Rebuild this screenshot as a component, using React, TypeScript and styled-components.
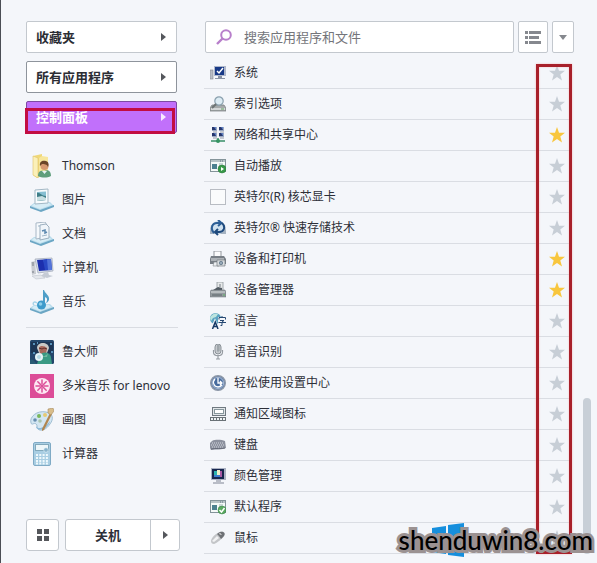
import React, { useState } from "react";
import styled, { createGlobalStyle } from "styled-components";

const GlobalStyle = createGlobalStyle`
  *, *::before, *::after { box-sizing: border-box; }
  body {
    margin: 0;
    background: #f4f6fa;
    color: #2d2f38;
    font: 12px/18px "Noto Sans", "Noto Sans CJK SC", sans-serif;
  }
  button, input { font: inherit; color: inherit; margin: 0; }
  button { cursor: pointer; }
  a { color: inherit; text-decoration: none; }
  svg { display: block; flex: none; }
`;

const Menu = styled.div`
  display: grid;
  grid-template-columns: 152px minmax(0, 1fr);
  column-gap: 26px;
  min-height: 100vh;
  padding: 21px 23px 9px 25px;
  border-left: 1px solid #4a4d54;
`;

const Sidebar = styled.aside`
  display: flex;
  flex-direction: column;
  padding-bottom: 3px;
`;

const Categories = styled.nav`
  display: flex;
  flex-direction: column;
  gap: 8px;
  margin-bottom: 16px;
`;

const CategoryButton = styled.button<{ $tone?: "dark" | "active" }>`
  position: relative;
  display: flex;
  align-items: center;
  justify-content: space-between;
  width: 151px;
  height: 32px;
  padding: 0 10px 0 9px;
  border: 1px solid ${(p) => (p.$tone === "active" ? "#7d4aa3" : p.$tone === "dark" ? "#8e949c" : "#c3c8ce")};
  border-radius: 2px;
  background: ${(p) => (p.$tone === "active" ? "#c170fb" : "#fff")};
  color: ${(p) => (p.$tone === "active" ? "#fff" : "#2b2d34")};
  font-size: 13px;
  font-weight: 700;
`;

const CategoryFrame = styled.span`
  position: absolute;
  inset: 6px 1px -2px -2px;
  border: 3px solid #c20d42;
  pointer-events: none;
`;

const Arrow = styled.span<{ $light?: boolean }>`
  border: solid transparent;
  border-width: 4px 0 4px 5px;
  border-left-color: ${(p) => (p.$light ? "#f8e9ff" : "#55575c")};
`;

const Places = styled.ul`
  list-style: none;
  margin: 0;
  padding: 0;
`;

const Place = styled.a`
  display: flex;
  align-items: center;
  gap: 8px;
  height: 34px;
  padding-left: 4px;
  white-space: nowrap;
`;

const Divider = styled.hr`
  width: 100%;
  margin: 8px 0 7px;
  border: 0;
  border-top: 1px solid #d9dce2;
`;

const PowerBar = styled.footer`
  display: flex;
  gap: 6px;
  width: 154px;
  margin-top: auto;
`;

const TilesButton = styled.button`
  display: grid;
  place-items: center;
  width: 33px;
  height: 32px;
  padding: 0;
  border: 1px solid #c3c8ce;
  border-radius: 3px;
  background: #fff;
`;

const PowerGroup = styled.div`
  display: flex;
  flex: 1;
  height: 32px;
  border: 1px solid #c3c8ce;
  border-radius: 3px;
  background: #fff;
`;

const PowerButton = styled.button`
  flex: 1;
  padding: 0;
  border: 0;
  background: none;
  font-size: 13px;
  font-weight: 700;
`;

const PowerMore = styled.button`
  display: grid;
  place-items: center;
  width: 29px;
  padding: 0;
  border: 0;
  border-left: 1px solid #c3c8ce;
  background: none;
`;

const Content = styled.main`
  display: flex;
  flex-direction: column;
  gap: 5px;
`;

const Toolbar = styled.div`
  display: flex;
  gap: 4px;
  height: 32px;
  padding-left: 1px;
`;

const SearchBox = styled.label`
  display: flex;
  flex: 1;
  align-items: center;
  gap: 12px;
  min-width: 0;
  padding: 0 10px;
  border: 1px solid #c3c8ce;
  border-radius: 2px;
  background: #fff;
`;

const SearchInput = styled.input`
  flex: 1;
  min-width: 0;
  padding: 0;
  border: 0;
  outline: 0;
  background: none;
  font-size: 13px;
  &::placeholder { color: #74757a; opacity: 1; }
`;

const ToolButton = styled.button<{ $narrow?: boolean }>`
  display: grid;
  place-items: center;
  width: ${(p) => (p.$narrow ? 22 : 30)}px;
  padding: 0;
  border: 1px solid #c3c8ce;
  border-radius: 2px;
  background: #fff;
`;

const Results = styled.div`
  position: relative;
  margin-right: 3px;
`;

const ResultList = styled.ul`
  list-style: none;
  margin: 0;
  padding: 0;
`;

const ResultRow = styled.li`
  display: flex;
  align-items: center;
  height: 31px;
  padding: 0 6px;
  border-bottom: 1px solid #dadde3;
`;

const ResultLink = styled.a`
  display: flex;
  flex: 1;
  align-items: center;
  gap: 8px;
`;

const StarButton = styled.button`
  padding: 0;
  border: 0;
  background: none;
`;

const StarFrame = styled.div`
  position: absolute;
  top: 6px;
  right: -1px;
  bottom: 0;
  width: 36px;
  border: 3px solid #a8202a;
  box-shadow: 0 0 2px #f5b8bc, inset 0 0 2px #f5b8bc;
  pointer-events: none;
`;

const ScrollThumb = styled.div`
  position: absolute;
  right: -20px;
  bottom: 0;
  width: 8px;
  height: 156px;
  border-radius: 4px;
  background: #c8cfd7;
`;

const Watermark = styled.div`
  position: absolute;
  right: 4px;
  bottom: 5px;
  display: grid;
  align-items: center;
  pointer-events: none;
`;

const WatermarkLogo = styled.svg`
  grid-area: 1 / 1;
  margin-left: 33px;
`;

const WatermarkText = styled.span`
  grid-area: 1 / 1;
  color: #000;
  font: 500 26px/36px Lato, sans-serif;
  -webkit-text-stroke: 6px #9b9292;
  paint-order: stroke fill;
`;

const Small = ({ children }: { children: React.ReactNode }) => (
  <svg width="16" height="16" viewBox="0 0 16 16" aria-hidden="true">{children}</svg>
);
const Large = ({ children }: { children: React.ReactNode }) => (
  <svg width="24" height="24" viewBox="0 0 24 24" aria-hidden="true">{children}</svg>
);

const Tray = () => (
  <>
    <path d="M4 15 20 14 24 18 10 23 0 18Z" fill="#b9dcec" />
    <path d="M0 18 10 22 24 17V19L11 24 0 20Z" fill="#6ba6c4" />
    <path d="M4 16 19 15 21 17 10 21 2 18Z" fill="#d7edf6" />
  </>
);

const UserFolder = () => (
  <Large>
    <path d="M3 2 12 0V22L7 24 3 21Z" fill="#f0d878" />
    <path d="M12 2 18 3V21L9 23V4Z" fill="#f7e69c" />
    <path d="M3 2 8 4V24L3 21Z" fill="#fbf0b8" stroke="#dfc56a" strokeWidth=".6" />
    <circle cx="14.500" cy="12" r="4" fill="#d79a70" />
    <path d="M10 12C9 7 13 6 16 7S19 11 18 13C17 10 14 10 12 10Z" fill="#6b4628" />
    <path d="M8 22C8 17 11 16 14 17 19 15 21 18 21 22 17 24 12 24 8 22Z" fill="#5f9e7c" />
    <path d="M12 17 14.500 20 17 17" fill="#e8f2f4" />
  </Large>
);
const Pictures = () => (
  <Large>
    <Tray />
    <path d="M5 2 18 1V15L5 16Z" fill="#f7fbfd" stroke="#a3b8c5" />
    <path d="M7 4 16 3.500V12L7 13Z" fill="#86bfd2" />
    <path d="M7 5C10 4 11 8 16 8V12L7 13Z" fill="#3e7d86" />
    <path d="M7 9 12 8 16 10V12L7 13Z" fill="#c8dfe2" />
  </Large>
);
const Documents = () => (
  <Large>
    <Tray />
    <path d="M6 1 15 0 17 3V15L6 17Z" fill="#f5f9fc" stroke="#a9b8c6" />
    <path d="M10 3 16 2 19 5V16L10 18Z" fill="#f0f5fa" stroke="#9cafbf" />
    <path d="M12 9 15 8V11L17 10" stroke="#5c88af" strokeWidth="1.500" fill="none" />
    <path d="M12 14 17 13M8 4 10 4" stroke="#a0b6c8" />
  </Large>
);
const Computer = () => (
  <Large>
    <path d="M1 6 5 5 6 18 2 19Z" fill="#c9ccd2" />
    <path d="M2 7H4M2 9H4M2 16H4" stroke="#777c86" />
    <path d="M5 3 22 2 23 15 8 17Z" fill="#d5dce8" stroke="#9ca5b5" strokeWidth=".7" />
    <path d="M7 4 21 3 22 14 9 15Z" fill="#1c2fae" />
    <path d="M13 4 21 3 22 14 18 14Z" fill="#5374d9" />
    <path d="M13 4 17 3 18 14 15 14Z" fill="#2948c4" />
    <path d="M14 17 18 16 19 19 23 20 17 22 11 20Z" fill="#c5cbd5" />
    <path d="M2 20 11 19 15 22 6 23Z" fill="#e4e7ec" stroke="#b5bbc5" strokeWidth=".5" />
  </Large>
);
const Music = () => (
  <Large>
    <Tray />
    <path d="M14 0C15 4 20 5 19 10 18 12 17 13 16 13 18 9 17 8 15 7V17H13V0Z" fill="#4f9fc8" />
    <circle cx="11.500" cy="15" r="4.500" fill="#3d9bcb" />
    <circle cx="10.500" cy="14" r="1.800" fill="#8ccdea" />
    <path d="M4 15C2 13 4 11 7 13" fill="none" stroke="#a8d5e9" strokeWidth="1.500" />
  </Large>
);
const Master = () => (
  <Large>
    <rect width="24" height="24" rx="1.500" fill="#24466b" />
    <path d="M1 2H23V13H1Z" fill="#1d3554" />
    <path d="M7 8C7 2 18 1 19 8L17 13H9Z" fill="#c9c8c5" />
    <path d="M9 8C10 5 15 6 17 8L16 14H10Z" fill="#a8685c" />
    <path d="M9 8 12 9 14 8 17 9" stroke="#602e2a" fill="none" />
    <path d="M10 15C13 11 20 12 21 17L22 24H7Z" fill="#3a9a84" />
    <path d="M10 14C13 17 15 17 18 13L17 17H11Z" fill="#70b7a1" />
    <circle cx="9" cy="17" r="4" fill="#e5f3f7" />
    <circle cx="9" cy="17" r="2" fill="#b4d8e4" />
    <path d="M3 4H5M20 4H22M3 13H5M21 12H23M7 3H8" stroke="#6eb3dd" strokeWidth="1.500" />
    <path d="M0 20C3 18 5 22 7 24H0Z" fill="#295b74" />
  </Large>
);
const Duomi = () => (
  <Large>
    <rect width="24" height="24" fill="#dc4d98" />
    <circle cx="12" cy="12" r="8" fill="#fde8f3" />
    <path d="M12 6V10M12 14V18M6 12H10M14 12H18M7.800 7.800 10.500 10.500M13.500 13.500 16.200 16.200M16.200 7.800 13.500 10.500M10.500 13.500 7.800 16.200" stroke="#dc4d98" strokeWidth="1.500" strokeLinecap="round" />
    <circle cx="12" cy="12" r="1.500" fill="#dc4d98" />
  </Large>
);
const Paint = () => (
  <Large>
    <path d="M1 15C-1 9 7 2 16 4 23 5 24 11 20 16 17 21 11 24 8 21 6 19 8 17 6 16 4 14 2 18 1 15Z" fill="#d3e6f2" stroke="#8fb2c9" strokeWidth=".8" />
    <path d="M6 18C8 22 15 20 20 13 19 20 8 25 6 19Z" fill="#8fbbd9" />
    <circle cx="5" cy="12" r="1.800" fill="#668daf" />
    <circle cx="9" cy="8" r="2" fill="#79b75a" />
    <circle cx="15" cy="7" r="2" fill="#e7ca73" />
    <circle cx="10" cy="13" r="1.800" fill="#a9c5b0" />
    <path d="M20 5 22 6 14 22 12 23 12 21Z" fill="#b18650" />
    <path d="M18 1 23 0 24 3 21 7 18 5Z" fill="#d8bd8a" stroke="#a68c61" strokeWidth=".6" />
  </Large>
);
const Calculator = () => (
  <Large>
    <rect x="3.500" y=".5" width="17" height="23" rx="1.500" fill="#a9cee3" stroke="#7faac5" />
    <rect x="5.500" y="2.500" width="13" height="6" fill="#edf6f9" stroke="#82a8bb" />
    <path d="M6 13H18M6 16H18M6 19H18M6 21.500H18" stroke="#eef8fc" strokeWidth="1.800" strokeDasharray="2 1.300" />
    <circle cx="16" cy="8" r="2.300" fill="#87b3cc" stroke="#e5f3fa" strokeWidth=".6" />
  </Large>
);

const SystemIcon = () => (
  <Small>
    <rect x="0" y="5" width="3" height="9" fill="#b9bdc5" stroke="#80858f" strokeWidth=".6" />
    <rect x="4" y="1" width="12" height="10" fill="#aeb7cb" />
    <rect x="5" y="2" width="9" height="8" fill="#183987" />
    <path d="m7 6 2 2 4-5" fill="none" stroke="#fff" strokeWidth="1.500" />
    <path d="M8 11H12V13H15V14H5V13H8Z" fill="#8992a4" />
  </Small>
);
const IndexIcon = () => (
  <Small>
    <path d="M2 9H14L16 12V15H0V12Z" fill="#a5a9aa" stroke="#73797b" strokeWidth=".7" />
    <path d="M1 12H15V14H1Z" fill="#d4d7d8" /><path d="M11 13H14" stroke="#62a164" />
    <circle cx="9" cy="5" r="4.200" fill="#dcebf3" stroke="#8aa0ae" strokeWidth="1.200" />
    <path d="M6 8 2 12" stroke="#6e7475" strokeWidth="2" />
  </Small>
);
const NetworkIcon = () => (
  <Small>
    {[[2, 0], [9, 0], [2, 6], [9, 6]].map(([x, y]) => (
      <g key={`${x}-${y}`}>
        <rect x={x} y={y} width="5" height="4" fill="#9ba9c3" /><path d={`M${x} ${y}H${x + 4}V${y + 3}H${x}Z`} fill="#26366d" />
        <path d={`M${x + 2} ${y}H${x + 4}V${y + 3}Z`} fill="#5e80c5" /><path d={`M${x + 1} ${y + 5}H${x + 5}`} stroke="#9299a8" />
      </g>
    ))}
    <path d="M7 11H9V13H15V15H1V13H7Z" fill="#66a88c" /><circle cx="8" cy="14" r="2" fill="#349361" />
  </Small>
);
const WindowBase = () => (
  <>
    <rect x=".5" y="1.500" width="15" height="12" fill="#f5faf8" stroke="#84949a" />
    <path d="M1 3H15" stroke="#b7c3c6" strokeWidth="2" />
    <path d="M10 3H14" stroke="#627580" strokeDasharray="1 1" />
    <path d="M2 6H7V11H2Z" fill="#4c8190" /><path d="M9 6H13M9 8H12" stroke="#9fb5b5" />
  </>
);
const AutoPlayIcon = () => (
  <Small><WindowBase /><circle cx="12" cy="11" r="4" fill="#389848" stroke="#27783a" strokeWidth=".5" /><path d="m11 9 3 2-3 2Z" fill="#fff" /></Small>
);
const BlankIcon = () => <Small><rect x=".5" y=".5" width="15" height="15" fill="#fafbfc" stroke="#b8bcc3" /></Small>;
const StorageIcon = () => (
  <Small>
    <path d="M1 5H15L16 11V14H0V11Z" fill="#a6b3c1" />
    <circle cx="8" cy="7.500" r="6.500" fill="#cfe1ef" />
    <path d="M4 13C0 9 2 3 7 3H10M8 0 11.500 3 8 6" fill="none" stroke="#2c5e96" strokeWidth="2" />
    <path d="M12 3C16 7 14 12 9 12H6M8 9 5 12 8 15" fill="none" stroke="#1f4a7d" strokeWidth="2" />
  </Small>
);
const PrinterIcon = () => (
  <Small>
    <path d="M4 0H11V6H4Z" fill="#fbfbfc" stroke="#91969c" />
    <path d="M1 5H14L16 8V13H0V8Z" fill="#777e85" /><path d="M1 7H14V10H1Z" fill="#adb2b7" />
    <path d="M4 11H9V15H3Z" fill="#edf0f2" stroke="#81878b" strokeWidth=".6" />
    <path d="M7 9H15V15H7Z" fill="#d9dddf" stroke="#757d83" strokeWidth=".7" />
    <circle cx="11" cy="12" r="2" fill="#63788b" /><circle cx="11" cy="12" r=".8" fill="#d6e5ef" />
  </Small>
);
const DeviceIcon = () => (
  <Small>
    <path d="M7 0H13V9H7Z" fill="#e7e9ea" stroke="#90989c" strokeWidth=".8" /><path d="M9 2H11V5H9Z" fill="#abb1b5" />
    <path d="M3 8 8 5 12 6V9H3Z" fill="#515a62" />
    <path d="M1 8H15L16 10V15H0V10Z" fill="#92999d" stroke="#697278" strokeWidth=".5" />
    <path d="M1 10H15" stroke="#dce0e2" /><path d="M2 13H12" stroke="#5d666c" /><path d="M13 13H15" stroke="#61b868" />
  </Small>
);
const LanguageIcon = () => (
  <Small>
    <circle cx="5.500" cy="5.500" r="5.500" fill="#5ba4c2" /><path d="M1 3C4 0 6 0 8 1L6 4 3 5 1 8 0 5Z" fill="#bde5df" />
    <path d="M2 16 5 9 8 16M3 13.500H7" stroke="#f4f6fa" strokeWidth="3" fill="none" />
    <path d="M2.500 16 5.300 9 8 16M3.500 13.500H7" stroke="#163966" strokeWidth="1.500" fill="none" />
    <path d="M8 4H16V13H8Z" fill="#f4f6fa" />
    <path d="M9 6.500V4.500H15.500V6.500M12 3V4M10 7.500H14L12 9V12.500H10.500M8.500 9.500H16" stroke="#254872" fill="none" />
  </Small>
);
const MicIcon = () => (
  <Small>
    <rect x="5" y="0" width="6" height="10" rx="3" fill="#c5c9cd" stroke="#8b9298" />
    <path d="M7 2H10M7 4H10M7 6H10M8 1V8" stroke="#858c92" strokeWidth=".7" />
    <path d="M3.500 6V8C3.500 13 12.500 13 12.500 8V6M8 11V15M6 15H10" stroke="#969ca2" strokeWidth="1.200" fill="none" />
  </Small>
);
const AccessIcon = () => (
  <Small>
    <circle cx="8" cy="8" r="7.300" fill="#6784af" stroke="#8c97a7" strokeWidth="1.400" />
    <circle cx="8" cy="8" r="5.500" fill="#466b9e" stroke="#dbe5f2" strokeWidth=".6" />
    <path d="M8 3V8H12M10 6 12 8 10 10M5 4C2 7 4 12 8 12 10 12 11 11 12 10" stroke="#fff" strokeWidth="1.300" fill="none" />
  </Small>
);
const TrayAreaIcon = () => (
  <Small>
    <rect x="2.500" y="1.500" width="13" height="8" fill="#e0e5e8" stroke="#6f7980" /><rect x="4.500" y="3.500" width="9" height="4" fill="#fff" stroke="#87979d" />
    <path d="M0 11H16V15H0Z" fill="#6a7277" /><path d="M1 13H15" stroke="#eef3f5" strokeWidth="2" strokeDasharray="2 1" />
  </Small>
);
const KeyboardIcon = () => (
  <Small>
    <path d="M2 4C6 2 12 3 15 4L16 11C12 13 6 12 1 13L0 11V6Z" fill="#8c919e" />
    <path d="M2 6H14M1 8H15M2 10H14" stroke="#d4d7df" strokeDasharray="1 1" /><path d="M1 12C6 11 11 12 15 11" stroke="#676c7a" fill="none" />
  </Small>
);
const ColorIcon = () => (
  <Small>
    <rect x="1" y="0" width="15" height="12" fill="#aab1c2" /><rect x="2" y="1" width="12" height="10" fill="#17264f" />
    <path d="M4 3H8V9H4Z" fill="#2bb4b1" /><path d="M7 2H10V9H7Z" fill="#f0efc9" /><path d="M10 3H12V9H10Z" fill="#a859a4" /><path d="M4 7H10V9H4Z" fill="#3d7cd0" />
    <path d="M6 12H11V14H14V16H3V14H6Z" fill="#b9bdc7" />
  </Small>
);
const DefaultsIcon = () => (
  <Small><WindowBase /><circle cx="12" cy="11" r="4" fill="#5aa960" stroke="#348044" strokeWidth=".5" /><path d="m9.500 11 2 2 3-4" fill="none" stroke="#fff" strokeWidth="1.500" /></Small>
);
const MouseIcon = () => (
  <Small>
    <path d="M1 11C1 8 6 3 10 2 14 1 16 3 14 6 12 9 7 13 4 14 2 14 1 13 1 11Z" fill="#c3c5c8" />
    <path d="M7 4 10 2C13 1 16 3 14 6L11 9 9 6Z" fill="#6e7175" /><path d="M9 4 12 5 10 3Z" fill="#fff" />
    <path d="M2 11 7 6 9 8 4 12Z" fill="#f1f2f3" />
  </Small>
);

const StarIcon = ({ on }: { on: boolean }) => (
  <svg width="16" height="16" viewBox="0 0 16 16" aria-hidden="true">
    <path d="M8 0 10 5.700 16 5.800 11.300 9.500 13 15.500 8 12 3 15.500 4.700 9.500 0 5.800 6 5.700Z" fill={on ? "#f8c63d" : "#c7ced6"} />
  </svg>
);

const places = [
  { name: "Thomson", Icon: UserFolder },
  { name: "图片", Icon: Pictures },
  { name: "文档", Icon: Documents },
  { name: "计算机", Icon: Computer },
  { name: "音乐", Icon: Music },
];

const programs = [
  { name: "鲁大师", Icon: Master },
  { name: "多米音乐 for lenovo", Icon: Duomi },
  { name: "画图", Icon: Paint },
  { name: "计算器", Icon: Calculator },
];

const settings = [
  { name: "系统", Icon: SystemIcon },
  { name: "索引选项", Icon: IndexIcon },
  { name: "网络和共享中心", Icon: NetworkIcon },
  { name: "自动播放", Icon: AutoPlayIcon },
  { name: "英特尔(R) 核芯显卡", Icon: BlankIcon },
  { name: "英特尔® 快速存储技术", Icon: StorageIcon },
  { name: "设备和打印机", Icon: PrinterIcon },
  { name: "设备管理器", Icon: DeviceIcon },
  { name: "语言", Icon: LanguageIcon },
  { name: "语音识别", Icon: MicIcon },
  { name: "轻松使用设置中心", Icon: AccessIcon },
  { name: "通知区域图标", Icon: TrayAreaIcon },
  { name: "键盘", Icon: KeyboardIcon },
  { name: "颜色管理", Icon: ColorIcon },
  { name: "默认程序", Icon: DefaultsIcon },
  { name: "鼠标", Icon: MouseIcon },
];

const PlaceList = ({ items }: { items: typeof places }) => (
  <Places>
    {items.map(({ name, Icon }) => (
      <li key={name}><Place href="#"><Icon />{name}</Place></li>
    ))}
  </Places>
);

export default function App() {
  const [starred, setStarred] = useState(["网络和共享中心", "设备和打印机", "设备管理器"]);
  const toggle = (name: string) =>
    setStarred((s) => (s.includes(name) ? s.filter((n) => n !== name) : [...s, name]));

  return (
    <>
      <GlobalStyle />
      <Menu>
        <Sidebar>
          <Categories>
            <CategoryButton>收藏夹<Arrow /></CategoryButton>
            <CategoryButton $tone="dark">所有应用程序<Arrow /></CategoryButton>
            <CategoryButton $tone="active">控制面板<Arrow $light /><CategoryFrame /></CategoryButton>
          </Categories>
          <PlaceList items={places} />
          <Divider />
          <PlaceList items={programs} />
          <PowerBar>
            <TilesButton aria-label="开始屏幕">
              <svg width="12" height="12" viewBox="0 0 12 12"><path d="M0 0H5V5H0ZM7 0H12V5H7ZM0 7H5V12H0ZM7 7H12V12H7Z" fill="#55575b" /></svg>
            </TilesButton>
            <PowerGroup>
              <PowerButton>关机</PowerButton>
              <PowerMore aria-label="更多电源选项"><Arrow /></PowerMore>
            </PowerGroup>
          </PowerBar>
        </Sidebar>
        <Content>
          <Toolbar>
            <SearchBox>
              <svg width="16" height="16" viewBox="0 0 16 16" fill="none" stroke="#b87fcb" strokeWidth="2" aria-hidden="true">
                <circle cx="10" cy="6" r="4.800" /><path d="M6.500 9.500 1 15" strokeWidth="2.400" />
              </svg>
              <SearchInput type="search" aria-label="搜索" placeholder="搜索应用程序和文件" />
            </SearchBox>
            <ToolButton aria-label="列表视图">
              <svg width="16" height="13" viewBox="0 0 16 13"><path d="M0 0H3V3H0ZM4 0H16V3H4ZM0 5H3V8H0ZM4 5H14V8H4ZM0 10H3V13H0ZM4 10H16V13H4Z" fill="#85888e" /></svg>
            </ToolButton>
            <ToolButton $narrow aria-label="更多">
              <svg width="8" height="5" viewBox="0 0 8 5"><path d="M0 0H8L4 5Z" fill="#85888e" /></svg>
            </ToolButton>
          </Toolbar>
          <Results>
            <ResultList>
              {settings.map(({ name, Icon }) => (
                <ResultRow key={name}>
                  <ResultLink href="#"><Icon />{name}</ResultLink>
                  <StarButton aria-label={`收藏 ${name}`} aria-pressed={starred.includes(name)} onClick={() => toggle(name)}>
                    <StarIcon on={starred.includes(name)} />
                  </StarButton>
                </ResultRow>
              ))}
            </ResultList>
            <StarFrame />
            <ScrollThumb />
          </Results>
        </Content>
      </Menu>
      <Watermark>
        <WatermarkLogo width="32" height="34" viewBox="0 0 32 34" aria-hidden="true">
          <path d="M0 5 14 3V16H0ZM16 2 32 0V16H16ZM0 18H14V31L0 29ZM16 18H32V34L16 32Z" fill="#168fdd" />
        </WatermarkLogo>
        <WatermarkText>shenduwin8.com</WatermarkText>
      </Watermark>
    </>
  );
}
